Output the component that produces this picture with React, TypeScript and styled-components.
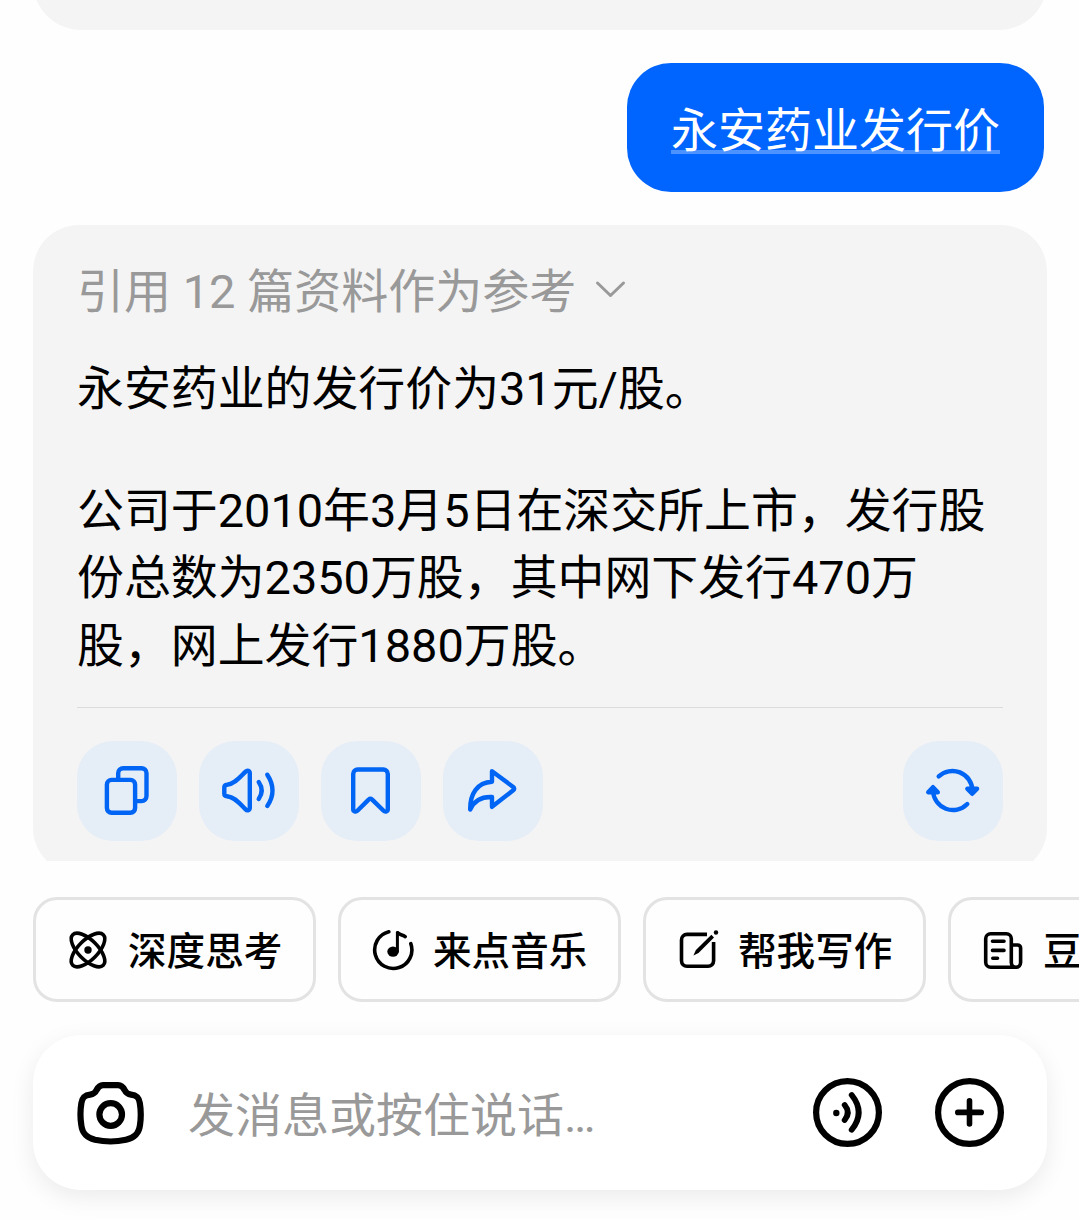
import React from "react";
import styled, { createGlobalStyle } from "styled-components";

const GlobalStyle = createGlobalStyle`
  *, *::before, *::after { box-sizing: border-box; }
  body { margin: 0; background: #fefefe; }
  button { font: inherit; border: 0; padding: 0; margin: 0; background: none; }
`;

const Screen = styled.div`
  width: 1079px;
  height: 1220px;
  overflow: hidden;
  display: flex;
  flex-direction: column;
  background: #fefefe;
  color: #000;
  font-family: Roboto, "Noto Sans CJK SC", sans-serif;
  font-size: 47px;
  line-height: 67.5px;
`;

const Messages = styled.main`
  flex: none;
  height: 861px;
  overflow: hidden;
  display: flex;
  flex-direction: column;
  justify-content: flex-start;
  gap: 33px;
  padding: 0 32px 0 33px;
`;

const PreviousAnswer = styled.div`
  flex: none;
  height: 130px;
  margin-top: -100px;
  border-radius: 48px;
  background: #f4f4f4;
`;

const Question = styled.div`
  flex: none;
  align-self: flex-end;
  height: 129px;
  margin-right: 3px;
  padding: 34px 44px 0;
  border-radius: 44px;
  background: #0065ff;
  color: #fff;
`;

const Keyword = styled.span`
  display: block;
  height: 57px;
  border-bottom: 4px solid rgba(255, 255, 255, 0.3);
  white-space: nowrap;
`;

const Answer = styled.article`
  flex: none;
  height: 649px;
  padding: 33px 44px 0;
  border-radius: 46px;
  background: #f4f4f4;
`;

const References = styled.button`
  display: flex;
  align-items: center;
  gap: 18px;
  height: 67px;
  color: #999;
  white-space: nowrap;

  svg {
    margin-bottom: 3px;
  }
`;

const Paragraph = styled.p<{ $gap: number }>`
  margin: ${(p) => p.$gap}px 0 0;
  font-size: 46.9px;
  white-space: nowrap;
`;

const Actions = styled.div`
  display: flex;
  gap: 22px;
  margin-top: 28px;
  padding-top: 33px;
  border-top: 1px solid #dcdcdc;
`;

const ActionButton = styled.button<{ $end?: boolean }>`
  width: 100px;
  height: 100px;
  margin-left: ${(p) => (p.$end ? "auto" : "0")};
  border-radius: 36px;
  background: #e5edf7;
  color: #0065f4;
`;

const LineIcon = styled.svg<{ $stroke: number }>`
  display: block;
  flex: none;
  fill: none;
  stroke: currentColor;
  stroke-width: ${(p) => p.$stroke}px;
  stroke-linecap: round;
  stroke-linejoin: round;
`;

const Chips = styled.nav`
  flex: none;
  display: flex;
  gap: 22px;
  margin-top: 36px;
  padding-left: 33px;
  overflow: hidden;
`;

const Chip = styled.button`
  flex: none;
  display: flex;
  align-items: center;
  gap: 18px;
  width: 283px;
  height: 105px;
  padding: 0 30px;
  border: 3px solid #e3e3e3;
  border-radius: 24px;
  color: #000;
  font-size: 38.6px;
  font-weight: 500;
  line-height: 56px;
  white-space: nowrap;
`;

const ChipText = styled.span`
  padding-top: 5px;
`;

const Composer = styled.footer`
  flex: none;
  display: flex;
  align-items: center;
  height: 155px;
  margin: 33px 32px 0 33px;
  padding: 0 42px 0 44px;
  border-radius: 48px;
  background: #fff;
  box-shadow: 0 7px 24px rgba(0, 0, 0, 0.08);
`;

const Placeholder = styled.span`
  flex: 1;
  margin-left: 43px;
  padding-top: 6px;
  color: #999;
  white-space: nowrap;
`;

const RoundButtons = styled.div`
  display: flex;
  gap: 52px;
`;

const ActionIcon = ({ children }: { children: React.ReactNode }) => (
  <LineIcon $stroke={4.4} width="100" height="100" viewBox="0 0 100 100">
    {children}
  </LineIcon>
);

const ChipIcon = ({ children }: { children: React.ReactNode }) => (
  <LineIcon $stroke={3.6} width="44" height="44" viewBox="0 0 44 44">
    {children}
  </LineIcon>
);

export default function App() {
  return (
    <>
      <GlobalStyle />
      <Screen>
        <Messages>
          <PreviousAnswer />
          <Question>
            <Keyword>永安药业发行价</Keyword>
          </Question>
          <Answer>
            <References>
              <span>引用 12 篇资料作为参考</span>
              <LineIcon $stroke={3} width="32" height="20" viewBox="0 0 32 20">
                <path d="M3.5 3 16.5 15.5 29.5 3" />
              </LineIcon>
            </References>
            <Paragraph $gap={30}>永安药业的发行价为31元/股。</Paragraph>
            <Paragraph $gap={54}>
              公司于2010年3月5日在深交所上市，发行股
              <br />
              份总数为2350万股，其中网下发行470万
              <br />
              股，网上发行1880万股。
            </Paragraph>
            <Actions>
              <ActionButton aria-label="复制">
                <ActionIcon>
                  <rect x="29.9" y="38.9" width="28.2" height="32.8" rx="4.6" />
                  <path d="M41.2 37.5V32.2a5 5 0 0 1 5-5H64.5a5 5 0 0 1 5 5V55.1a5 5 0 0 1-5 5H60" />
                </ActionIcon>
              </ActionButton>
              <ActionButton aria-label="朗读">
                <ActionIcon>
                  <path d="M25.3 46.5c0-1.8 1-2.7 2.7-2.8C36 43 41 36 46.6 30.6c1.8-1.8 4.2-.8 4.2 1.6V66.8c0 2.4-2.4 3.4-4.2 1.6C41 63 36 55.8 28 55.2c-1.7-.1-2.7-1-2.7-2.8Z" />
                  <path d="M59.7 41Q65.7 49.5 59.7 58M68.3 33.7Q78.7 49.5 68.3 65" />
                </ActionIcon>
              </ActionButton>
              <ActionButton aria-label="收藏">
                <ActionIcon>
                  <path d="M36.7 28.5H62.3a4.5 4.5 0 0 1 4.5 4.5V68.2c0 2.2-2.6 3.2-4.2 1.6L51.2 58.6q-1.8-1.6-3.6 0L36.4 69.8c-1.6 1.6-4.2.6-4.2-1.6V33a4.5 4.5 0 0 1 4.5-4.5Z" />
                </ActionIcon>
              </ActionButton>
              <ActionButton aria-label="分享">
                <ActionIcon>
                  <path d="M49 30.2 70.2 46q2 1.6 0 3.3L49 65.8V56C38 55.5 31 60 27.2 68.5 27 53 34 41.5 49 40.8Z" />
                </ActionIcon>
              </ActionButton>
              <ActionButton aria-label="重新生成" $end>
                <ActionIcon>
                  <path d="M35.7 35.4A20 20 0 0 1 69.4 49M30 50A20 20 0 0 0 64.3 63" />
                  <path fill="currentColor" d="M64.3 47.8h9.8l-4.9 5ZM25.2 51.2h9.6l-4.8-5Z" />
                </ActionIcon>
              </ActionButton>
            </Actions>
          </Answer>
        </Messages>

        <Chips>
          <Chip>
            <ChipIcon>
              <ellipse cx="22" cy="22" rx="21.6" ry="9.8" transform="rotate(45 22 22)" />
              <ellipse cx="22" cy="22" rx="21.6" ry="9.8" transform="rotate(-45 22 22)" />
              <circle cx="22" cy="22" r="3.7" fill="currentColor" stroke="none" />
            </ChipIcon>
            <ChipText>深度思考</ChipText>
          </Chip>
          <Chip>
            <ChipIcon>
              <path d="M17.8 3.8A18.6 18.6 0 1 0 39.8 15.6" />
              <ellipse cx="22" cy="23.6" rx="5.7" ry="5.2" fill="currentColor" stroke="none" />
              <path strokeWidth="3" d="M26.4 23.5V4.6" />
              <path d="M26.8 4.8C28.3 7 31.3 6.2 34.2 8.6" />
            </ChipIcon>
            <ChipText>来点音乐</ChipText>
          </Chip>
          <Chip>
            <ChipIcon>
              <path strokeLinecap="butt" d="M31 6.4H11A5.5 5.5 0 0 0 5.5 11.9V32.8A5.5 5.5 0 0 0 11 38.3H32.1A5.5 5.5 0 0 0 37.6 32.8V14" />
              <path fill="currentColor" stroke="none" d="M35.4 6.8 38 9.6 22.5 25 17.4 27.4 19.9 22Z" />
              <circle cx="40" cy="4.5" r="2.2" fill="currentColor" stroke="none" />
            </ChipIcon>
            <ChipText>帮我写作</ChipText>
          </Chip>
          <Chip>
            <ChipIcon>
              <path d="M35 39.3H9.7a5 5 0 0 1-5-5V10.7a5 5 0 0 1 5-5H25.3a5 5 0 0 1 5 5V34.6a4.65 4.65 0 0 0 9.3 0V20a3 3 0 0 0-3-3H30.3" />
              <path d="M11.5 13.2H23M11.5 22.4H23M11.8 30.2H16.5" />
            </ChipIcon>
            <ChipText>豆</ChipText>
          </Chip>
        </Chips>

        <Composer>
          <LineIcon $stroke={6.2} width="68" height="64" viewBox="0 0 68 64">
            <path d="M26 4.1H41.2C44.8 4.1 46.2 6.2 47.6 9 49 12 51 13.2 54 13.6 60 14.3 62 17 62.8 22 64 29 64 37 63 44 61.8 53.5 56.5 57 49 58.8 40 60.8 27 60.8 18 58.8 10.7 57 5.4 53.5 4.3 44 3.2 37 3.2 29 4.4 22 5.2 17 7.2 14.3 13.2 13.6 16.2 13.2 18.2 12 19.6 9 21 6.2 22.4 4.1 26 4.1Z" />
            <circle cx="33.7" cy="33.5" r="11.3" />
          </LineIcon>
          <Placeholder>发消息或按住说话…</Placeholder>
          <RoundButtons>
            <LineIcon $stroke={6.2} width="70" height="70" viewBox="0 0 70 70">
              <circle cx="34.5" cy="34.5" r="31.4" />
              <circle cx="23.3" cy="35" r="3.2" fill="currentColor" stroke="none" />
              <path strokeWidth="5.8" d="M31.7 27Q37.9 34.6 31.7 42M38.7 17Q52.7 34.5 38.7 51.8" />
            </LineIcon>
            <LineIcon $stroke={6.2} width="70" height="70" viewBox="0 0 70 70">
              <circle cx="34.5" cy="34.5" r="31.4" />
              <path strokeWidth="5.6" d="M22.8 34.4H46.2M34.5 22.8V46" />
            </LineIcon>
          </RoundButtons>
        </Composer>
      </Screen>
    </>
  );
}
